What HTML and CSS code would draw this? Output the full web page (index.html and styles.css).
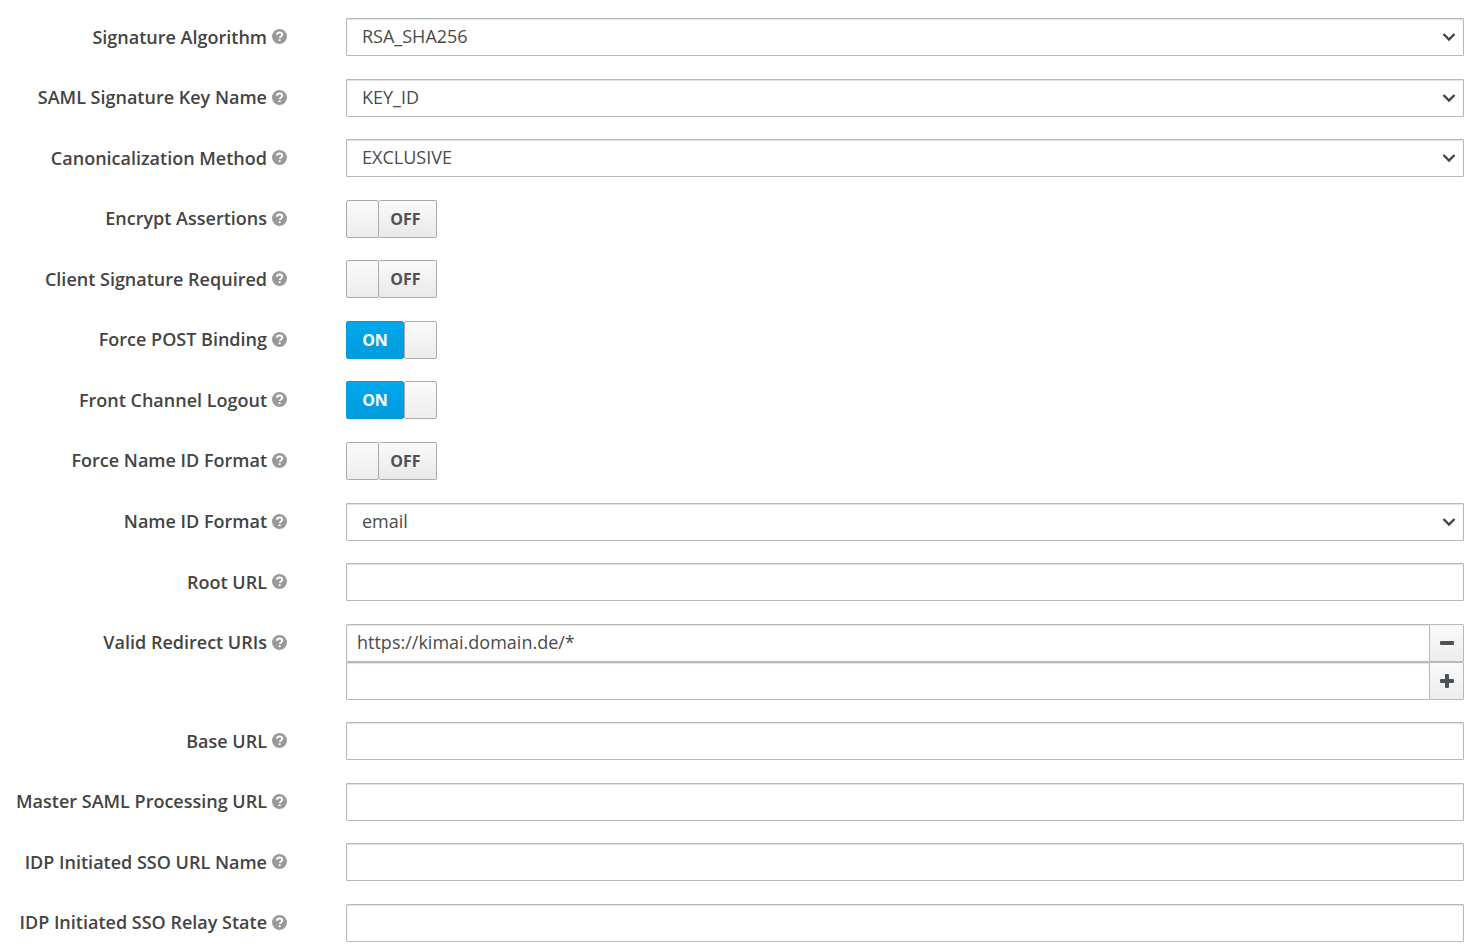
FILE: index.html
```html
<!DOCTYPE html>
<html lang="en">
<head>
    <meta charset="UTF-8">
    <meta name="viewport" content="width=device-width, initial-scale=1.0">
    <title>Client Settings</title>
    <link rel="stylesheet" href="styles.css">
</head>
<body>
    <!-- Shared icons -->
    <svg class="sprite" aria-hidden="true">
        <symbol id="icon-help" viewBox="0 0 16 16">
            <circle cx="8" cy="8" r="8" fill="#999"/>
            <path d="M5.2 6.2C5.3 4.5 6.4 3.7 8 3.7c1.700 0 2.900 1 2.900 2.400C10.900 7.900 8.200 7.900 8.200 9.700" fill="none" stroke="#fff" stroke-width="2"/>
            <path d="M7.100 10.900h2.100v2H7.100z" fill="#fff"/>
        </symbol>
        <symbol id="icon-down" viewBox="0 0 14 10">
            <path d="M1.500 2l5.500 5.500L12.500 2" fill="none" stroke="#444" stroke-width="2.400"/>
        </symbol>
    </svg>

    <form class="settings">
        <div class="row">
            <div class="row-label"><label for="algorithm">Signature Algorithm</label><svg class="help"><use href="#icon-help"/></svg></div>
            <div class="select-box">
                <select id="algorithm" class="control"><option>RSA_SHA256</option></select>
                <svg class="arrow"><use href="#icon-down"/></svg>
            </div>
        </div>
        <div class="row">
            <div class="row-label"><label for="keyName">SAML Signature Key Name</label><svg class="help"><use href="#icon-help"/></svg></div>
            <div class="select-box">
                <select id="keyName" class="control"><option>KEY_ID</option></select>
                <svg class="arrow"><use href="#icon-down"/></svg>
            </div>
        </div>
        <div class="row">
            <div class="row-label"><label for="canonicalization">Canonicalization Method</label><svg class="help"><use href="#icon-help"/></svg></div>
            <div class="select-box">
                <select id="canonicalization" class="control"><option>EXCLUSIVE</option></select>
                <svg class="arrow"><use href="#icon-down"/></svg>
            </div>
        </div>

        <!-- Switches -->
        <div class="row">
            <div class="row-label"><label for="encrypt">Encrypt Assertions</label><svg class="help"><use href="#icon-help"/></svg></div>
            <label class="switch"><input type="checkbox" id="encrypt"><span class="on">ON</span><span class="knob"></span><span class="off">OFF</span></label>
        </div>
        <div class="row">
            <div class="row-label"><label for="clientSignature">Client Signature Required</label><svg class="help"><use href="#icon-help"/></svg></div>
            <label class="switch"><input type="checkbox" id="clientSignature"><span class="on">ON</span><span class="knob"></span><span class="off">OFF</span></label>
        </div>
        <div class="row">
            <div class="row-label"><label for="forcePost">Force POST Binding</label><svg class="help"><use href="#icon-help"/></svg></div>
            <label class="switch"><input type="checkbox" id="forcePost" checked><span class="on">ON</span><span class="knob"></span><span class="off">OFF</span></label>
        </div>
        <div class="row">
            <div class="row-label"><label for="frontChannel">Front Channel Logout</label><svg class="help"><use href="#icon-help"/></svg></div>
            <label class="switch"><input type="checkbox" id="frontChannel" checked><span class="on">ON</span><span class="knob"></span><span class="off">OFF</span></label>
        </div>
        <div class="row">
            <div class="row-label"><label for="forceNameId">Force Name ID Format</label><svg class="help"><use href="#icon-help"/></svg></div>
            <label class="switch"><input type="checkbox" id="forceNameId"><span class="on">ON</span><span class="knob"></span><span class="off">OFF</span></label>
        </div>

        <div class="row">
            <div class="row-label"><label for="nameIdFormat">Name ID Format</label><svg class="help"><use href="#icon-help"/></svg></div>
            <div class="select-box">
                <select id="nameIdFormat" class="control"><option>email</option></select>
                <svg class="arrow"><use href="#icon-down"/></svg>
            </div>
        </div>

        <!-- URLs -->
        <div class="row">
            <div class="row-label"><label for="rootUrl">Root URL</label><svg class="help"><use href="#icon-help"/></svg></div>
            <input type="text" id="rootUrl" class="control">
        </div>
        <div class="row">
            <div class="row-label"><label for="redirectUri">Valid Redirect URIs</label><svg class="help"><use href="#icon-help"/></svg></div>
            <div class="uri-list">
                <div class="uri">
                    <input type="text" id="redirectUri" class="control" value="https://kimai.domain.de/*">
                    <button type="button" aria-label="Remove"><svg viewBox="0 0 14 14"><rect y="5" width="14" height="4" rx="1"/></svg></button>
                </div>
                <div class="uri">
                    <input type="text" class="control" aria-label="New redirect URI">
                    <button type="button" aria-label="Add"><svg viewBox="0 0 14 14"><rect y="5" width="14" height="4" rx="1"/><rect x="5" width="4" height="14" rx="1"/></svg></button>
                </div>
            </div>
        </div>
        <div class="row">
            <div class="row-label"><label for="baseUrl">Base URL</label><svg class="help"><use href="#icon-help"/></svg></div>
            <input type="text" id="baseUrl" class="control">
        </div>
        <div class="row">
            <div class="row-label"><label for="masterUrl">Master SAML Processing URL</label><svg class="help"><use href="#icon-help"/></svg></div>
            <input type="text" id="masterUrl" class="control">
        </div>
        <div class="row">
            <div class="row-label"><label for="ssoName">IDP Initiated SSO URL Name</label><svg class="help"><use href="#icon-help"/></svg></div>
            <input type="text" id="ssoName" class="control">
        </div>
        <div class="row">
            <div class="row-label"><label for="relayState">IDP Initiated SSO Relay State</label><svg class="help"><use href="#icon-help"/></svg></div>
            <input type="text" id="relayState" class="control">
        </div>
    </form>
</body>
</html>
```
FILE: styles.css
```css
* {
    margin: 0;
    padding: 0;
    box-sizing: border-box;
    font-family: 'Open Sans', sans-serif;
}

body {
    background: #fff;
    color: #444;
    font-size: 18px;
}

.sprite {
    display: none;
}

.settings {
    min-height: 100vh;
    padding: 18px 6px 8px 0;
    display: flex;
    flex-direction: column;
    justify-content: space-between;
    gap: 20px;
}

.row {
    display: grid;
    grid-template-columns: 287px 1fr;
    column-gap: 59px;
    align-items: start;
}

.row-label {
    height: 37px;
    display: flex;
    justify-content: flex-end;
    align-items: center;
    gap: 5px;
    font-weight: 600;
    white-space: nowrap;
}

.help {
    width: 15px;
    height: 15px;
}

.control {
    display: block;
    width: 100%;
    height: 38px;
    padding: 0 10px 2px;
    border: 1px solid #b8b8b8;
    border-radius: 1px;
    background: #fff;
    box-shadow: inset 0 1px 1px rgba(0, 0, 0, 0.12);
    color: #4a4a4a;
    font-size: 18px;
}

.select-box {
    position: relative;
}

.select-box .control {
    appearance: none;
    padding: 0 40px 2px 15px;
}

.arrow {
    position: absolute;
    right: 8px;
    top: 14px;
    width: 14px;
    height: 10px;
    pointer-events: none;
}

/* ON / OFF switch */
.switch {
    position: relative;
    display: flex;
    justify-self: start;
    width: 91px;
    height: 38px;
    font-size: 16px;
    font-weight: 700;
    line-height: 36px;
    text-align: center;
    cursor: pointer;
}

.switch input {
    position: absolute;
    opacity: 0;
}

.switch .knob {
    width: 33px;
    border: 1px solid #aaa;
    border-radius: 2px;
    background: linear-gradient(#fafafa, #ededed);
}

.switch .on,
.switch .off {
    flex: 1;
    border: 1px solid #aaa;
    border-radius: 2px;
}

.switch .on {
    display: none;
    border-color: #009bdd;
    background: linear-gradient(#00a9ec, #009bdd);
    color: #fff;
}

.switch .off {
    border-left: none;
    padding-right: 4px;
    background: linear-gradient(#fafafa, #e9e9e9);
    color: #4d5258;
}

.switch input:checked ~ .on {
    display: block;
}

.switch input:checked ~ .off {
    display: none;
}

/* Redirect list */
.uri {
    display: flex;
}

.uri button {
    flex: none;
    width: 35px;
    height: 38px;
    margin-left: -1px;
    display: flex;
    justify-content: center;
    align-items: center;
    border: 1px solid #b8b8b8;
    border-radius: 1px;
    background: linear-gradient(#fafafa, #ededed);
    cursor: pointer;
}

.uri button svg {
    width: 14px;
    height: 14px;
    fill: #4d5258;
}
```
